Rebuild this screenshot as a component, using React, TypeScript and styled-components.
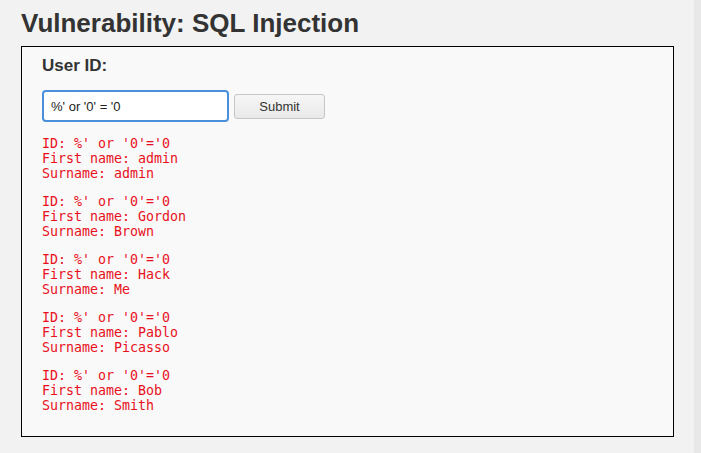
import React from "react";
import styled, { createGlobalStyle } from "styled-components";

const Global = createGlobalStyle`
  html, body { margin: 0; padding: 0; background: #f2f2f2; }
  body { font-family: "Liberation Sans", Arial, sans-serif; color: #333; }
`;

const Page = styled.div`
  display: flex;
  width: 701px;
  height: 453px;
  overflow: hidden;
`;

const Main = styled.div`
  width: 694px;
  padding: 0 0 0 21px;
  box-sizing: border-box;
`;

const Strip = styled.div`
  width: 7px;
  background: #e8e8e8;
`;

const Title = styled.h1`
  margin: 7px 0 7px 0;
  font-size: 26px;
  line-height: 32px;
  font-weight: bold;
  color: #333;
`;

const Box = styled.div`
  width: 653px;
  height: 391px;
  box-sizing: border-box;
  border: 1px solid #000;
  background: #f8f9f8;
  padding: 8px 20px 0 20px;
`;

const Label = styled.div`
  font-size: 17px;
  line-height: 22px;
  font-weight: bold;
  color: #333;
`;

const Form = styled.form`
  display: flex;
  align-items: center;
  gap: 5px;
  margin-top: 13px;
`;

const Input = styled.input`
  width: 187px;
  height: 32px;
  box-sizing: border-box;
  border: 2px solid #4a8fdc;
  border-radius: 4px;
  padding: 0 0 0 7px;
  font-family: "Liberation Sans", Arial, sans-serif;
  font-size: 13px;
  color: #222;
  background: #fff;
  outline: none;
`;

const Button = styled.button`
  width: 91px;
  height: 25px;
  box-sizing: border-box;
  border: 1px solid #c6c6c6;
  border-radius: 3px;
  background: linear-gradient(#f6f6f6, #e9e9e9);
  font-family: "Liberation Sans", Arial, sans-serif;
  font-size: 13px;
  color: #333;
  padding: 0;
`;

const Results = styled.div`
  margin-top: 14px;
  display: flex;
  flex-direction: column;
  gap: 13px;
`;

const Pre = styled.pre`
  margin: 0;
  font-family: "DejaVu Sans Mono", monospace;
  font-size: 13.3px;
  line-height: 15px;
  color: #e8101c;
`;

const rows = [
  ["admin", "admin"],
  ["Gordon", "Brown"],
  ["Hack", "Me"],
  ["Pablo", "Picasso"],
  ["Bob", "Smith"],
];

export default function App() {
  return (
    <>
      <Global />
      <Page>
        <Main>
          <Title>Vulnerability: SQL Injection</Title>
          <Box>
            <Label>User ID:</Label>
            <Form onSubmit={(e) => e.preventDefault()}>
              <Input type="text" defaultValue="%' or '0' = '0" />
              <Button type="submit">Submit</Button>
            </Form>
            <Results>
              {rows.map(([f, s], i) => (
                <Pre key={i}>{`ID: %' or '0'='0\nFirst name: ${f}\nSurname: ${s}`}</Pre>
              ))}
            </Results>
          </Box>
        </Main>
        <Strip />
      </Page>
    </>
  );
}
